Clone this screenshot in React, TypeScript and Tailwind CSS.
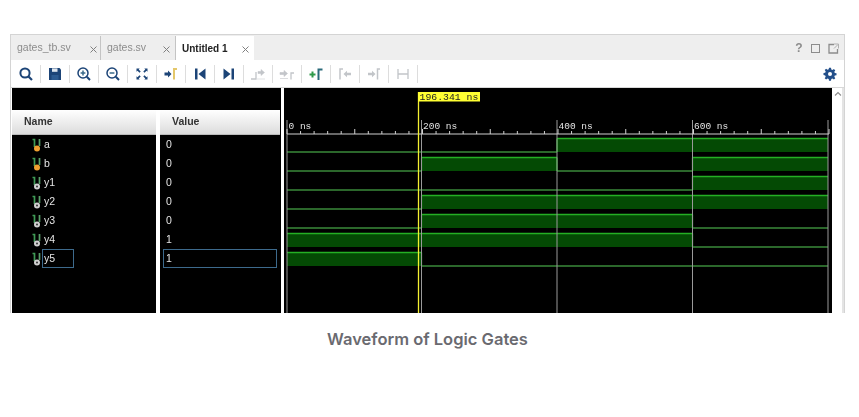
import React from "react";

const SANS = "font-['Liberation_Sans',Arial,sans-serif]";
const NAVY = "#1c4477";
const DIM = "#c2c5c9";

function Ico({ children }: { children: React.ReactNode }) {
  return (
    <svg width="16" height="16" viewBox="0 0 16 16" fill="none">
      {children}
    </svg>
  );
}

const tools: React.ReactNode[] = [
  <Ico><circle cx="7" cy="7" r="4.6" stroke={NAVY} strokeWidth="2" /><path d="M10.5 10.5 14 14" stroke={NAVY} strokeWidth="2.2" /></Ico>,
  <Ico><path d="M2 2h10.5L14 3.5V14H2Z" fill={NAVY} /><rect x="5" y="2.4" width="5.5" height="3.4" fill="#dfe6ee" /><rect x="4.5" y="9" width="7" height="5" fill="#2c5a90" /></Ico>,
  <Ico><circle cx="7" cy="7" r="5" stroke={NAVY} strokeWidth="1.5" /><path d="M4.6 7h4.8M7 4.6v4.8" stroke="#3a6a8a" strokeWidth="1.5" /><path d="M10.8 10.8 14 14" stroke={NAVY} strokeWidth="2" /></Ico>,
  <Ico><circle cx="7" cy="7" r="5" stroke={NAVY} strokeWidth="1.5" /><path d="M4.6 7h4.8" stroke="#3a6a8a" strokeWidth="1.5" /><path d="M10.8 10.8 14 14" stroke={NAVY} strokeWidth="2" /></Ico>,
  <Ico><path d="M2.500 2.500h3.200l-1 1 2 2-1.200 1.200-2-2-1 1ZM13.500 2.500v3.200l-1-1-2 2-1.200-1.200 2-2-1-1ZM2.500 13.500v-3.200l1 1 2-2 1.200 1.200-2 2 1 1ZM13.500 13.500h-3.200l1-1-2-2 1.200-1.200 2 2 1-1Z" fill={NAVY} /></Ico>,
  <Ico><path d="M1.500 6.500h3.500V4.600L8.500 8 5 11.400V9.500H1.500Z" fill={NAVY} /><path d="M14 3h-3v10.500" stroke="#e4c76a" strokeWidth="2" /></Ico>,
  <Ico><path d="M3 2.500h2.500v11H3ZM13.500 2.500v11L6.500 8Z" fill={NAVY} /></Ico>,
  <Ico><path d="M10.500 2.500H13v11h-2.500ZM2.500 2.500v11L9.500 8Z" fill={NAVY} /></Ico>,
  <Ico><path d="M1 13h5V6" stroke={DIM} strokeWidth="1.300" /><path d="M8 5.500h3V3.500l3.500 3-3.500 3v-2H8ZM7 13h8" fill={DIM} stroke={DIM} strokeWidth="0.500" /></Ico>,
  <Ico><path d="M1 12.500h8M1 6.500h4V4.500l3.500 3-3.500 3v-2H1Z" fill={DIM} stroke={DIM} strokeWidth="0.600" /><path d="M15 7h-3v6.500" stroke={DIM} strokeWidth="1.300" /></Ico>,
  <Ico><path d="M1.500 8.500h6M4.500 5.500v6" stroke="#2f9a4a" strokeWidth="2" /><path d="M14.500 3.500H10.500V14" stroke="#2a6a7a" strokeWidth="2" /></Ico>,
  <Ico><path d="M6 3H3v10.500" stroke={DIM} strokeWidth="1.500" /><path d="M14 6.700h-4V4.800L6.500 8 10 11.200V9.300h4Z" fill={DIM} /></Ico>,
  <Ico><path d="M2 6.700h4V4.800L9.500 8 6 11.200V9.300H2Z" fill={DIM} /><path d="M14 3h-2.500v10.500" stroke={DIM} strokeWidth="1.500" /></Ico>,
  <Ico><path d="M3 3v10M13 3v10M3 8h10" stroke={DIM} strokeWidth="1.300" /></Ico>,
];

function Tab({ label, active, w, pr }: { label: string; active?: boolean; w: string; pr: string }) {
  return (
    <div
      className={`${w} ${pr} flex items-center justify-between pl-[6px] ${
        active ? "bg-white text-[#222] font-bold text-[10px]" : "border-r border-[#c4c4c4] text-[#8c8c8c] text-[10.5px]"
      }`}
    >
      <span>{label}</span>
      <svg width="9" height="9" viewBox="0 0 9 9" className="mt-[2px]">
        <path d="M1.500 1.500l6 6M7.500 1.500l-6 6" stroke="#808080" strokeWidth="1" />
      </svg>
    </div>
  );
}

const signals = [
  { n: "a", v: "0", input: true, s: [0, 0, 1, 1] },
  { n: "b", v: "0", input: true, s: [0, 1, 0, 1] },
  { n: "y1", v: "0", s: [0, 0, 0, 1] },
  { n: "y2", v: "0", s: [0, 1, 1, 1] },
  { n: "y3", v: "0", s: [0, 1, 1, 0] },
  { n: "y4", v: "1", s: [1, 1, 1, 0] },
  { n: "y5", v: "1", s: [1, 0, 0, 0], sel: true },
];

function SigIcon({ input }: { input?: boolean }) {
  return (
    <svg width="10" height="14" viewBox="0 0 10 14" className="shrink-0">
      <path d="M.500 1.500h2V9" stroke="#3f9a55" strokeWidth="1.700" fill="none" />
      <path d="M7.500 1v7" stroke="#5aa06a" strokeWidth="1.700" />
      <circle cx="5" cy="10.500" r="3" fill={input ? "#f0a030" : "#d0d0d0"} />
      {!input && <circle cx="5" cy="10.500" r="1" fill="#333" />}
    </svg>
  );
}

const X = [287, 421.5, 557, 692.5, 828];

function Wave() {
  const ticks: number[] = [];
  for (let i = 0; i <= 40; i++) ticks.push(i);
  return (
    <svg width="548" height="225" viewBox="284 88 548 225" className="block">
      <rect x="284" y="88" width="548" height="225" fill="#000" />
      {signals.map((sig, r) => {
        const top = 138.5 + r * 19;
        const bot = 152 + r * 19;
        return (
          <g key={sig.n}>
            {sig.s.map((h, i) => {
              const a = X[i];
              const b = X[i + 1];
              return h ? (
                <g key={i}>
                  <rect x={a} y={top} width={b - a} height={bot - top} fill="#044a04" />
                  <path d={`M${a} ${top}H${b}`} stroke="#24b024" strokeWidth="1.300" />
                </g>
              ) : (
                <path key={i} d={`M${a} ${bot}H${b}`} stroke="#3a8a3a" strokeWidth="1.300" />
              );
            })}
            {sig.s.slice(1).map((h, i) =>
              h !== sig.s[i] ? (
                <path key={i} d={`M${X[i + 1]} ${top}V${bot}`} stroke="#20b020" strokeWidth="1.300" />
              ) : null
            )}
          </g>
        );
      })}
      {X.map((x) => (
        <path key={x} d={`M${x} 120V313`} stroke="#9a9a9a" strokeWidth="1" />
      ))}
      <path d="M287 134H829" stroke="#d0d0d0" strokeWidth="1" />
      {ticks.map((i) => (
        <path
          key={i}
          d={`M${287 + i * 13.55} ${i % 5 === 0 ? 129 : 131}V134`}
          stroke="#d0d0d0"
          strokeWidth="1"
        />
      ))}
      {["0 ns", "200 ns", "400 ns", "600 ns"].map((t, i) => (
        <text key={t} x={X[i] + 1.5} y="129" fill="#e4e4e4" fontSize="9.500" fontFamily="'Liberation Mono',monospace">
          {t}
        </text>
      ))}
      <path d="M418.500 92V313" stroke="#f4f030" strokeWidth="1.300" />
      <rect x="418" y="92" width="62" height="9.500" fill="#ffff33" />
      <text x="419.500" y="100" fill="#222" fontSize="9.800" fontFamily="'Liberation Mono',monospace">
        196.341 ns
      </text>
    </svg>
  );
}

export default function App() {
  return (
    <div className={`w-[859px] h-[417px] bg-white pt-[34px] pl-[10px] overflow-hidden ${SANS}`}>
      <div className="w-[835px] h-[279px] flex flex-col bg-white border-x border-t border-[#d4d4d4] blur-[0.35px]">
        <div className="h-[25px] flex bg-[#eeeeee] pt-[1px] pl-0">
          <Tab label="gates_tb.sv" w="w-[90px]" pr="pr-[2px]" />
          <Tab label="gates.sv" w="w-[75px]" pr="pr-[4px]" />
          <Tab label="Untitled 1" active w="w-[78px]" pr="pr-[4px]" />
          <div className="flex-1 flex items-center justify-end gap-[7px] pr-[5px]">
            <span className="text-[12px] font-bold text-[#8c8c8c] w-[10px] text-center">?</span>
            <div className="w-[9px] h-[9px] border-[1.5px] border-[#8c8c8c]" />
            <svg width="11" height="11" viewBox="0 0 11 11" fill="none" className="ml-[1px]">
              <path d="M6 1.500H1v8.500h8.500V6" stroke="#8c8c8c" strokeWidth="1.300" />
              <path d="M6 1h4.500v4.500M10 1.500 6 5.500" stroke="#b0b0b0" strokeWidth="1" />
            </svg>
          </div>
        </div>
        <div className="h-[28px] flex items-center bg-white border-b border-[#d8d8d8] pl-[1px]">
          {tools.map((t, i) => (
            <div key={i} className="w-[29px] h-[18px] flex items-center justify-center border-r border-[#dddddd]">
              {t}
            </div>
          ))}
          <div className="flex-1 flex justify-end pr-[7px]">
            <svg width="14" height="14" viewBox="0 0 14 14">
              <path
                d="M6 .8h2l.3 1.700 1.200.5 1.400-1 1.400 1.400-1 1.400.5 1.200 1.700.3v2l-1.700.3-.5 1.200 1 1.400-1.400 1.400-1.400-1-1.200.5-.3 1.700H6l-.3-1.700-1.200-.5-1.400 1-1.400-1.400 1-1.400-.5-1.200L.5 8V6l1.700-.3.5-1.200-1-1.400 1.400-1.400 1.400 1 1.200-.5Z"
                fill="#234f8a"
              />
              <circle cx="7" cy="7" r="2" fill="#fff" />
            </svg>
          </div>
        </div>
        <div className="flex-1 flex pl-[1px] min-h-0">
          <div className="w-[269px] flex flex-col">
            <div className="h-[22px] bg-black" />
            <div className="flex-1 flex min-h-0">
              <div className="w-[144px] flex flex-col bg-black">
                <div className="h-[25px] bg-gradient-to-b from-white to-[#dcdcdc] border-b border-[#bbbbbb] flex items-center pl-[12px] text-[10.5px] font-bold text-[#333]">
                  Name
                </div>
                {signals.map((s) => (
                  <div key={s.n} className="h-[19px] flex items-center pl-[20px] text-[10.5px] text-[#e4e4e4]">
                    <SigIcon input={s.input} />
                    {s.sel ? (
                      <span className="w-[32px] h-[19px] border border-[#3d6a8c] flex items-center pl-[1px]">
                        {s.n}
                      </span>
                    ) : (
                      <span className="ml-[2px]">{s.n}</span>
                    )}
                  </div>
                ))}
              </div>
              <div className="w-[4px] bg-white" />
              <div className="flex-1 flex flex-col bg-black">
                <div className="h-[25px] mr-[1px] bg-gradient-to-b from-white to-[#dcdcdc] border-b border-[#bbbbbb] flex items-center pl-[12px] text-[10.5px] font-bold text-[#333]">
                  Value
                </div>
                {signals.map((s) => (
                  <div key={s.n} className="h-[19px] flex items-center pl-[3px] pr-[4px] text-[10.5px] text-[#e4e4e4]">
                    {s.sel ? (
                      <span className="w-full h-[19px] border border-[#3d6a8c] flex items-center pl-[2px]">{s.v}</span>
                    ) : (
                      <span className="pl-[3px]">{s.v}</span>
                    )}
                  </div>
                ))}
              </div>
            </div>
          </div>
          <div className="w-[3px] bg-white" />
          <Wave />
          <div className="w-[10px] bg-white flex justify-center pt-[3px] pl-[2px]">
            <svg width="8" height="6" viewBox="0 0 8 6" fill="none">
              <path d="M1 4.500 4 1.500l3 3" stroke="#8c8c8c" strokeWidth="1.100" />
            </svg>
          </div>
          <div className="flex-1 bg-[#e4e4e4]" />
        </div>
      </div>
      <div className="w-[835px] mt-[15px] text-center font-['Inter',sans-serif] font-semibold text-[16.500px] leading-[22px] text-[#6a6a70]">
        Waveform of Logic Gates
      </div>
    </div>
  );
}
